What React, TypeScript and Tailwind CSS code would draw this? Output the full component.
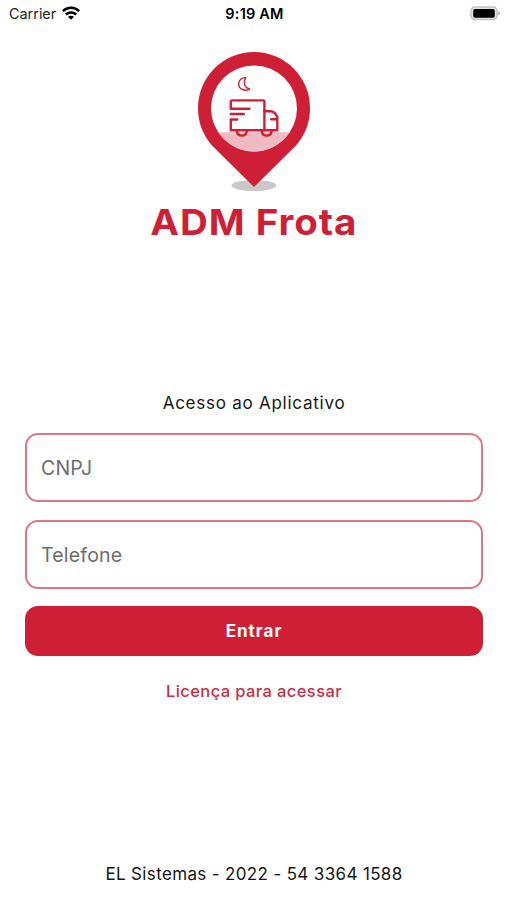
import { useState } from 'react';

// Barra de status do aparelho
function StatusBar() {
    return (
        <header className="grid grid-cols-3 items-center h-[27px] pl-[9px] pr-[6px] text-black">
            <div className="flex items-center gap-[6px]">
                <span className="pt-px text-[14.4px] leading-none text-[#222]">Carrier</span>
                <svg className="-mt-px" width="18" height="14" viewBox="0 0 18 14" fill="none" stroke="#000" strokeWidth="2.5">
                    <path d="M.9 5.1C5.4 .7 12.6 .7 17.1 5.1" />
                    <path d="M3.8 8.5c3-2.8 7.4-2.8 10.4 0" />
                    <path d="M9 13.8 6 10.8c1.7-1.5 4.3-1.5 6 0z" fill="#000" stroke="none" />
                </svg>
            </div>
            <span className="-ml-px pt-px text-center text-[14.5px] leading-none font-semibold tracking-[0.2px]">9:19 AM</span>
            <svg className="justify-self-end" width="31" height="15" viewBox="0 0 31 15">
                <rect x=".9" y="1" width="26.2" height="12.6" rx="4" fill="#e4e4e4" stroke="#c4c4c4" strokeWidth="1.5" />
                <rect x="3.2" y="3.1" width="21.6" height="8.6" rx="1.6" fill="#000" />
                <path d="M28.3 5.3c2.4.8 2.4 3.2 0 4z" fill="#aaa" />
            </svg>
        </header>
    );
}

function Logo() {
    return (
        <svg width="114" height="142" viewBox="197 51 114 142" fill="none">
            <ellipse cx="254" cy="185.5" rx="22.3" ry="5.5" fill="#c8c8c8" />
            <path d="M254 187 212 145.5C203 135 198 123 198 108a56 56 0 0 1 112 0c0 15-5 27-14 37.5z" fill="#cf1f36" />
            <circle cx="254" cy="108.4" r="43" fill="#fff" />
            <path d="M218.2 132.3h71.6a43 43 0 0 1-71.6 0z" fill="#efbac2" />
            {/* lua */}
            <path
                d="M245.7 77.7c-4-.5-7 2.6-7 6.2 0 4.8 5.9 8.4 11 5-5.2-.7-6.8-6.5-4-11.2z"
                stroke="#cf1f36"
                strokeWidth="1.4"
                strokeLinejoin="round"
            />
            {/* caminhão */}
            <g stroke="#cf1f36" strokeWidth="2.4" strokeLinecap="round" strokeLinejoin="round">
                <path d="M249.5 108.7h-18.7v-7q0-1.3 1.3-1.3h31q1.3 0 1.3 1.3v28.5" />
                <path d="M230.8 114h13" />
                <path d="M237.2 119.5h-6.4v10.7h46.5v-13.2c-1.6-3.2-3.6-5.7-6.5-5.7h-6.4" />
                <path d="M276.8 119.3h-5.6" />
                <path d="M236.8 130.7c1 6.6 9.1 6.6 10.1 0M261.6 130.7c1 6.6 9.1 6.6 10.1 0" />
            </g>
        </svg>
    );
}

const inputClass =
    "block w-full h-[69px] rounded-[13px] border-2 border-[#df7585] bg-white px-[14px] text-[19.5px] tracking-[0.2px] text-black placeholder:text-[#6c6c6c] outline-none";

export default function App() {
    const [cnpj, setCnpj] = useState('');
    const [telefone, setTelefone] = useState('');

    return (
        <div className="flex flex-col h-[900px] w-[507px] overflow-hidden bg-white font-['Inter',sans-serif]">
            <StatusBar />

            <div className="flex flex-col items-center pt-6 pl-px">
                <Logo />
                <h1 className="mt-[7px] scale-x-[1.07] text-[36px] leading-[44px] font-bold tracking-[0.9px] whitespace-nowrap text-[#cf1f36]">
                    ADM Frota
                </h1>
            </div>

            <form
                className="flex flex-col mt-[147px] pl-[25px] pr-[24px]"
                onSubmit={(e) => e.preventDefault()}
            >
                <p className="mb-[18px] text-center text-[17px] leading-6 tracking-[0.75px] text-[#161616]">
                    Acesso ao Aplicativo
                </p>
                <input
                    className={inputClass}
                    placeholder="CNPJ"
                    value={cnpj}
                    onChange={(e) => setCnpj(e.target.value)}
                />
                <input
                    className={`${inputClass} mt-[18px]`}
                    placeholder="Telefone"
                    value={telefone}
                    onChange={(e) => setTelefone(e.target.value)}
                />
                <button
                    type="submit"
                    className="mt-[17px] h-[50px] rounded-[13px] bg-[#cf1f36] pt-px text-[17px] font-bold tracking-[1px] text-white"
                >
                    Entrar
                </button>
                <a href="#" className="mt-[23px] text-center text-[16.5px] leading-6 font-medium tracking-[0.4px] text-[#cb2e45]">
                    Licença para acessar
                </a>
            </form>

            <footer className="mt-auto mb-[14px] pl-px text-center text-[17px] leading-6 tracking-[0.35px] whitespace-nowrap text-[#161616]">
                EL Sistemas - 2022 - 54 3364 1588
            </footer>
        </div>
    );
}
